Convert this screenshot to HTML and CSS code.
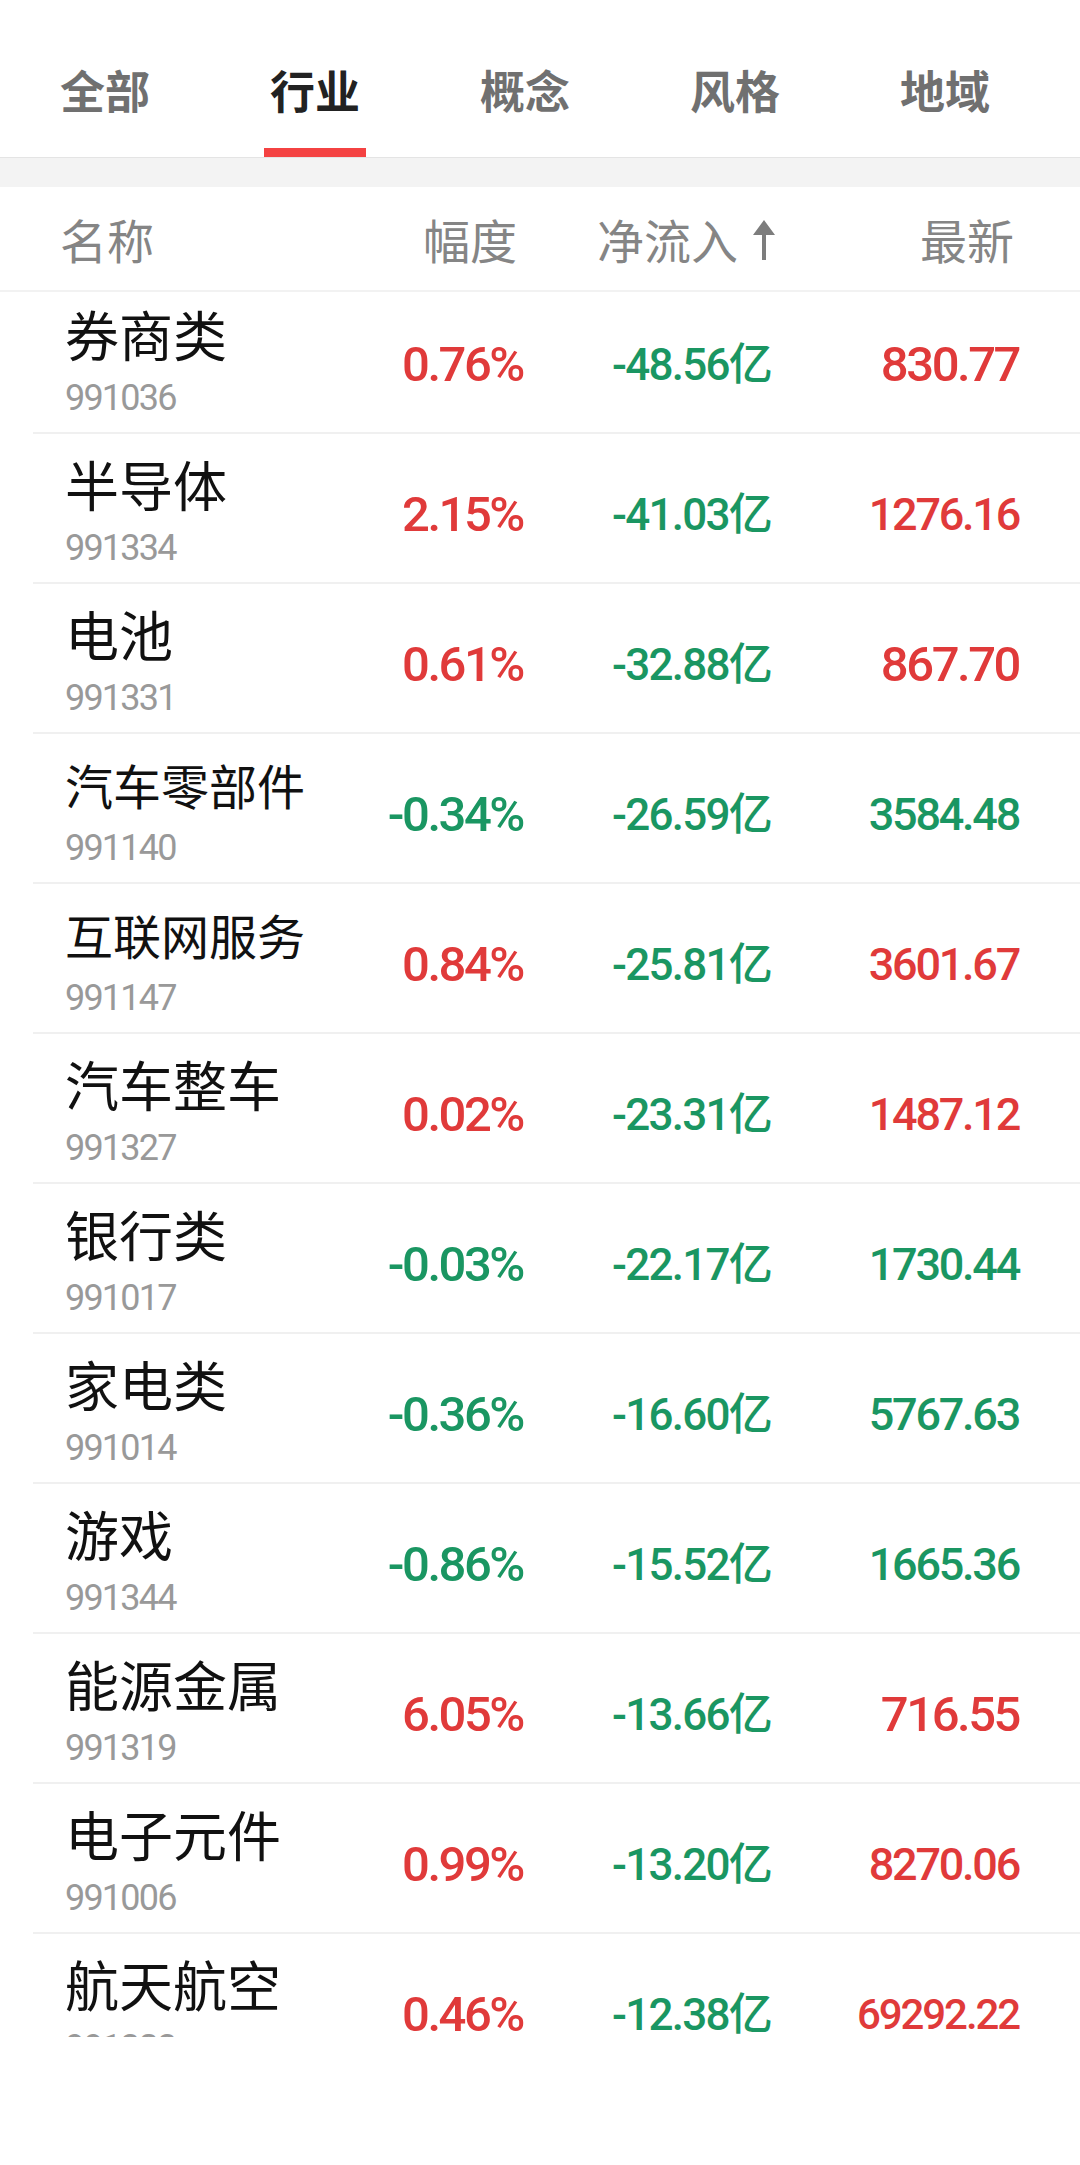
FILE: index.html
```html
<!DOCTYPE html>
<html lang="zh-CN">
<head>
  <meta charset="UTF-8">
  <meta name="viewport" content="width=device-width, initial-scale=1.0">
  <title>行业资金流向</title>
  <link rel="stylesheet" href="styles.css">
</head>
<body>

  <nav class="tabs">
    <div class="tab">全部</div>
    <div class="tab active">行业</div>
    <div class="tab">概念</div>
    <div class="tab">风格</div>
    <div class="tab">地域</div>
  </nav>
  <div class="gap"></div>

  <div class="thead">
    <div class="th th-name">名称</div>
    <div class="th th-pct">幅度</div>
    <div class="th th-flow">净流入<svg class="sort" width="22" height="40" viewBox="0 0 22 40"><path d="M11 0 L22 15 L13 15 L13 40 L9 40 L9 15 L0 15 Z" fill="#7d7d7d"/></svg></div>
    <div class="th th-last">最新</div>
  </div>

  <div class="list">
    <div class="list-inner">
      <div class="row">
        <div class="cell-name"><div class="name">券商类</div><div class="code">991036</div></div>
        <div class="num pct up">0.76%</div>
        <div class="num flow down">-48.56亿</div>
        <div class="num last up big">830.77</div>
      </div>
      <div class="row">
        <div class="cell-name"><div class="name">半导体</div><div class="code">991334</div></div>
        <div class="num pct up">2.15%</div>
        <div class="num flow down">-41.03亿</div>
        <div class="num last up mid">1276.16</div>
      </div>
      <div class="row">
        <div class="cell-name"><div class="name">电池</div><div class="code">991331</div></div>
        <div class="num pct up">0.61%</div>
        <div class="num flow down">-32.88亿</div>
        <div class="num last up big">867.70</div>
      </div>
      <div class="row">
        <div class="cell-name"><div class="name long">汽车零部件</div><div class="code">991140</div></div>
        <div class="num pct down">-0.34%</div>
        <div class="num flow down">-26.59亿</div>
        <div class="num last down mid">3584.48</div>
      </div>
      <div class="row">
        <div class="cell-name"><div class="name long">互联网服务</div><div class="code">991147</div></div>
        <div class="num pct up">0.84%</div>
        <div class="num flow down">-25.81亿</div>
        <div class="num last up mid">3601.67</div>
      </div>
      <div class="row">
        <div class="cell-name"><div class="name">汽车整车</div><div class="code">991327</div></div>
        <div class="num pct up">0.02%</div>
        <div class="num flow down">-23.31亿</div>
        <div class="num last up mid">1487.12</div>
      </div>
      <div class="row">
        <div class="cell-name"><div class="name">银行类</div><div class="code">991017</div></div>
        <div class="num pct down">-0.03%</div>
        <div class="num flow down">-22.17亿</div>
        <div class="num last down mid">1730.44</div>
      </div>
      <div class="row">
        <div class="cell-name"><div class="name">家电类</div><div class="code">991014</div></div>
        <div class="num pct down">-0.36%</div>
        <div class="num flow down">-16.60亿</div>
        <div class="num last down mid">5767.63</div>
      </div>
      <div class="row">
        <div class="cell-name"><div class="name">游戏</div><div class="code">991344</div></div>
        <div class="num pct down">-0.86%</div>
        <div class="num flow down">-15.52亿</div>
        <div class="num last down mid">1665.36</div>
      </div>
      <div class="row">
        <div class="cell-name"><div class="name">能源金属</div><div class="code">991319</div></div>
        <div class="num pct up">6.05%</div>
        <div class="num flow down">-13.66亿</div>
        <div class="num last up big">716.55</div>
      </div>
      <div class="row">
        <div class="cell-name"><div class="name">电子元件</div><div class="code">991006</div></div>
        <div class="num pct up">0.99%</div>
        <div class="num flow down">-13.20亿</div>
        <div class="num last up mid">8270.06</div>
      </div>
      <div class="row">
        <div class="cell-name"><div class="name">航天航空</div><div class="code">991323</div></div>
        <div class="num pct up">0.46%</div>
        <div class="num flow down">-12.38亿</div>
        <div class="num last up small">69292.22</div>
      </div>
    </div>
  </div>

</body>
</html>
```

FILE: styles.css
```css
body{
  margin: 0;
  padding: 0;
  background: #fff;
  font-family: Roboto, "Noto Sans CJK SC", sans-serif;
}

/* top tabs */
.tabs{
  display: flex;
  height: 157px;
  padding-right: 30px;
  border-bottom: 1px solid #e4e4e4;
}
.tab{
  flex: 1;
  display: flex;
  flex-direction: column;
  align-items: center;
  padding-top: 67px;
  font-family: "Noto Sans CJK SC", sans-serif;
  font-size: 45px;
  line-height: 45px;
  font-weight: 700;
  color: #707070;
}
.tab.active{
  color: #222;
}
.tab.active::after{
  content: "";
  width: 102px;
  height: 9px;
  margin-top: auto;
  background: #f44242;
}
.gap{
  height: 29px;
  background: #f3f3f3;
}

/* table head */
.thead{
  display: grid;
  grid-template-columns: 303px 160px 248px 248px;
  align-items: center;
  height: 103px;
  padding-left: 60px;
  border-bottom: 2px solid #f2f2f2;
  font-family: "Noto Sans CJK SC", sans-serif;
  font-size: 47px;
  line-height: 47px;
  color: #858585;
}
.th{
  display: flex;
  justify-content: flex-end;
  align-items: flex-end;
}
.th-name{
  justify-content: flex-start;
}
.th-pct{
  padding-right: 6px;
}
.th-flow{
  margin-right: -4px;
}
.th-last{
  padding-right: 5px;
}
.sort{
  margin-left: 15px;
  margin-bottom: 2px;
}

/* rows */
.list{
  height: 1745px;
  overflow: hidden;
}
.list-inner{
  margin-top: -8px;
}
.row{
  display: grid;
  grid-template-columns: 298px 160px 248px 248px;
  align-items: start;
  height: 148px;
  margin-left: 33px;
  padding-left: 32px;
  border-bottom: 2px solid #f0f0f0;
}
.cell-name{
  padding-top: 23px;
}
.name{
  height: 54px;
  font-family: "Noto Sans CJK SC", sans-serif;
  font-size: 54px;
  line-height: 54px;
  color: #111;
  white-space: nowrap;
}
.name.long{
  font-size: 48px;
}
.code{
  margin-top: 19px;
  font-size: 36px;
  line-height: 36px;
  letter-spacing: -0.05em;
  color: #999;
}
.num{
  padding-top: 59px;
  line-height: 44px;
  font-weight: 500;
  text-align: right;
  white-space: nowrap;
  letter-spacing: -0.05em;
}
.pct{
  font-size: 49px;
}
.flow{
  font-size: 44px;
  letter-spacing: -0.04em;
}
.last.big{
  font-size: 49px;
}
.last.mid{
  font-size: 45px;
}
.last.small{
  font-size: 42px;
}
.up{
  color: #e03a3a;
}
.down{
  color: #1a9662;
}
```
